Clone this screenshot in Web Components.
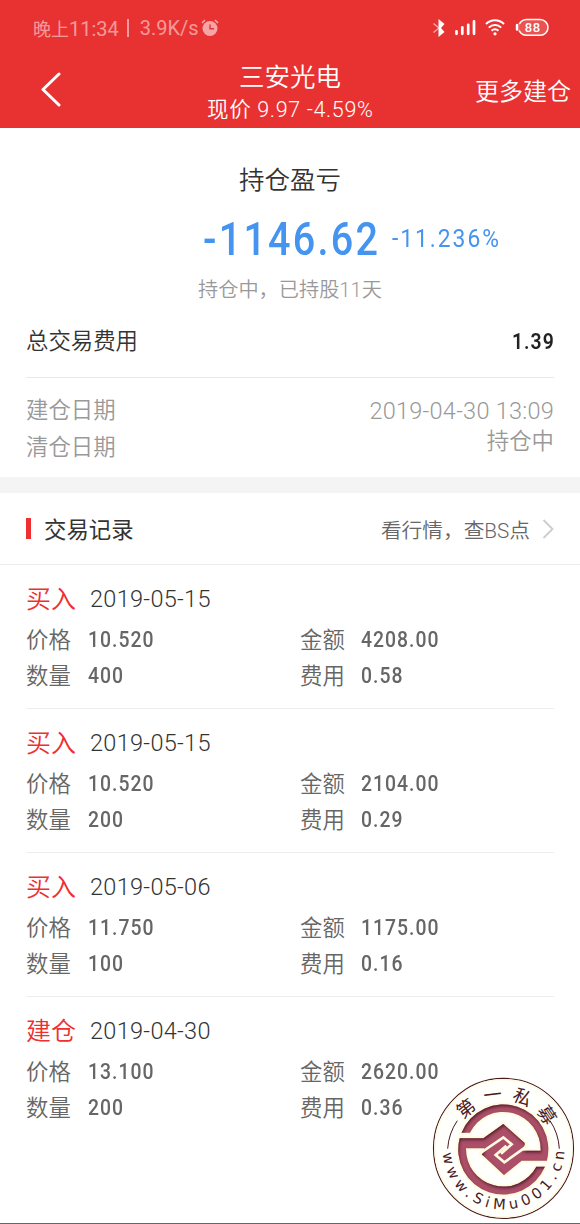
<!DOCTYPE html>
<html lang="zh-CN">
<head>
<meta charset="utf-8">
<title>三安光电</title>
<style>
body {
    margin: 0;
    background: #fff;
    font-family: Roboto, "Noto Sans CJK SC", sans-serif;
    font-weight: 350;
    color: #333;
}
</style>
</head>
<body>
<stock-page></stock-page>

<script>
customElements.define('status-bar',
    class StatusBar extends HTMLElement {
        constructor() {
        super();
        this.attachShadow({ mode: 'open' }).innerHTML = `
            <style>
            :host {
                display: flex;
                align-items: center;
                height: 56px;
                padding: 0 30px 0 33px;
                box-sizing: border-box;
                color: rgba(255, 255, 255, 0.52);
                font-size: 20px;
                font-weight: 400;
                white-space: pre;
            }

            .cjk { font-size: 18px; }
            .bar {
                width: 2px;
                height: 18px;
                margin: 0 11px 0 8px;
                background: currentColor;
            }
            .alarm { margin-left: 2px; }
            .icons {
                display: flex;
                align-items: center;
                margin-left: auto;
                color: #fff;
            }
            svg { display: block; }
            </style>

            <span class="time"><span class="cjk">晚上</span>11:34</span>
            <span class="bar"></span>
            <span>3.9K/s</span>
            <svg class="alarm" width="18" height="18" viewBox="0 0 18 18">
                <circle cx="9" cy="9.500" r="7.500" fill="#f5a5a7"/>
                <path d="M1 4 4 1M14 1l3 3" stroke="#f5a5a7" stroke-width="1.600"/>
                <path d="M9 5.500v4.300h4" fill="none" stroke="#e83231" stroke-width="1.400"/>
            </svg>
            <div class="icons">
                <svg width="118" height="20" viewBox="0 0 118 20">
                    <path d="M6.500 1 12.500 6 9 10 12.500 14 6.500 19z" fill="#fff"/>
                    <path d="M1.500 5.500 7 10 1.500 14.500" fill="none" stroke="#fff" stroke-opacity=".6" stroke-width="1.300"/>
                    <path d="M24.500 15.800v-2.500M30.300 15.800v-6.500M36.200 15.800v-9M42 15.800v-12.500" stroke="#fff" stroke-width="2.700" stroke-linecap="round"/>
                    <g fill="none" stroke="#fff" stroke-width="2">
                        <path d="M54 6a12.500 12.500 0 0 1 18 0"/>
                        <path d="M56.800 9.600a8.700 8.700 0 0 1 12.400 0"/>
                        <path d="M59.500 12.800a4.900 4.900 0 0 1 7 0"/>
                    </g>
                    <circle cx="63" cy="15.800" r="1.600" fill="#fff"/>
                    <rect x="86.500" y="1.600" width="29.500" height="15.600" rx="7.800" fill="#fff" fill-opacity=".16" stroke="#fff" stroke-width="1.500"/>
                    <path d="M85 7v4.500" stroke="#fff" stroke-width="2.400" stroke-linecap="round"/>
                    <path d="M87 5.800v6.800" stroke="#e83231" stroke-width="1.200"/>
                    <text x="100.500" y="13.900" text-anchor="middle" fill="#fff" font-size="13" font-weight="500" textLength="15.500">88</text>
                </svg>
            </div>
        `;
        }
    }
);

customElements.define('nav-bar',
    class NavBar extends HTMLElement {
        constructor() {
        super();
        this.attachShadow({ mode: 'open' }).innerHTML = `
            <style>
            :host {
                display: grid;
                grid-template-columns: 1fr auto 1fr;
                align-items: center;
                height: 72.400px;
                padding-bottom: 6px;
                box-sizing: border-box;
                color: #fff;
            }

            .back {
                margin-left: 40px;
                margin-bottom: 1px;
            }
            .center {
                text-align: center;
                padding-top: 2px;
            }
            .title {
                display: block;
                font-size: 25.500px;
                line-height: 38px;
            }
            .price {
                display: block;
                font-size: 21.500px;
                line-height: 27px;
                letter-spacing: 0.650px;
                margin-right: -0.650px;
                white-space: nowrap;
            }
            .action {
                display: block;
                justify-self: end;
                margin-right: 9px;
                font-size: 24px;
            }
            </style>

            <svg class="back" width="24" height="36" viewBox="0 0 24 36">
                <path d="M19 3 3 18.500l16 15.500" fill="none" stroke="#fff" stroke-width="3" stroke-linecap="round" stroke-linejoin="round"/>
            </svg>
            <div class="center">
                <slot name="title" class="title"></slot>
                <slot name="price" class="price"></slot>
            </div>
            <slot name="action" class="action"></slot>
        `;
        }
    }
);

customElements.define('profit-summary',
    class ProfitSummary extends HTMLElement {
        constructor() {
        super();
        this.attachShadow({ mode: 'open' }).innerHTML = `
            <style>
            :host {
                display: flex;
                flex-direction: column;
                align-items: center;
                height: 174px;
                padding-top: 33px;
                box-sizing: border-box;
            }

            h1 {
                margin: 0;
                font-size: 25.500px;
                line-height: 38px;
                font-weight: inherit;
            }
            .amount {
                display: flex;
                align-items: center;
                align-self: flex-start;
                height: 56px;
                margin: 13px 0 0 203px;
                color: #4494f0;
            }
            .profit, .rate {
                transform: scaleX(0.86);
                transform-origin: left;
            }
            .profit {
                width: 189px;
                font-size: 46px;
                font-weight: 500;
                letter-spacing: 2.600px;
            }
            .rate {
                font-size: 26.500px;
                font-weight: 450;
                letter-spacing: 2.300px;
                padding-bottom: 4px;
            }
            p {
                margin: 9px 0 0;
                font-size: 20.200px;
                line-height: 30px;
                color: #999;
            }
            </style>

            <h1><slot name="label"></slot></h1>
            <div class="amount">
                <span class="profit"><slot name="profit"></slot></span>
                <span class="rate"><slot name="rate"></slot></span>
            </div>
            <p><slot name="note"></slot></p>
        `;
        }
    }
);

customElements.define('position-info',
    class PositionInfo extends HTMLElement {
        constructor() {
        super();
        this.attachShadow({ mode: 'open' }).innerHTML = `
            <style>
            :host {
                display: block;
                height: 175px;
                padding: 0 26px;
                font-size: 22.400px;
                border-bottom: 16px solid #f4f4f4;
            }

            .fee {
                display: flex;
                justify-content: space-between;
                align-items: center;
                height: 75px;
                border-bottom: 1px solid #eaeaea;
            }
            .fee span { padding-bottom: 2px; }
            .fee b {
                margin-right: -1px;
                padding-top: 2px;
                font-size: 22.500px;
                font-weight: 600;
                letter-spacing: 1.200px;
                color: #222;
                transform: scaleX(0.86);
                transform-origin: right;
            }
            .dates {
                display: flex;
                justify-content: space-between;
                padding-top: 14px;
                color: #999;
            }
            .dates .names { line-height: 37px; }
            .dates .values {
                padding-top: 4px;
                line-height: 30px;
                text-align: right;
            }
            .dates .date {
                font-size: 23.500px;
                letter-spacing: 0.25px;
            }
            </style>

            <div class="fee">
                <span>总交易费用</span>
                <b><slot name="fee"></slot></b>
            </div>
            <div class="dates">
                <div class="names">
                    <div>建仓日期</div>
                    <div>清仓日期</div>
                </div>
                <div class="values">
                    <div class="date"><slot name="opened"></slot></div>
                    <div><slot name="closed"></slot></div>
                </div>
            </div>
        `;
        }
    }
);

customElements.define('section-head',
    class SectionHead extends HTMLElement {
        constructor() {
        super();
        this.attachShadow({ mode: 'open' }).innerHTML = `
            <style>
            :host {
                display: flex;
                align-items: center;
                height: 72px;
                padding: 0 26px;
                box-sizing: border-box;
                border-bottom: 1px solid #ececec;
            }

            .mark {
                width: 5px;
                height: 21px;
                margin-right: 13px;
                background: #ee3030;
            }
            h2 {
                margin: 0;
                padding-bottom: 1px;
                font-size: 22.400px;
                font-weight: 400;
            }
            .link {
                margin-left: auto;
                font-size: 20.700px;
                color: #666;
            }
            svg { margin-left: 12px; }
            </style>

            <span class="mark"></span>
            <h2><slot></slot></h2>
            <span class="link"><slot name="link"></slot></span>
            <svg width="12" height="20" viewBox="0 0 12 20">
                <path d="M1.500 1 10.500 10l-9 9" fill="none" stroke="#ccc" stroke-width="1.800"/>
            </svg>
        `;
        }
    }
);

customElements.define('trade-record',
    class TradeRecord extends HTMLElement {
        constructor() {
        super();
        const get = name => this.getAttribute(name);
        this.attachShadow({ mode: 'open' }).innerHTML = `
            <style>
            :host {
                display: block;
                height: 144px;
                margin: 0 26px;
                padding-top: 12px;
                box-sizing: border-box;
                border-bottom: 1px solid #eee;
                color: #666;
            }
            :host(:last-of-type) { border-bottom-color: transparent; }

            .head {
                display: flex;
                align-items: center;
                height: 40px;
                gap: 14px;
            }
            .kind {
                font-size: 25px;
                color: #ee3030;
            }
            .date {
                font-size: 23.500px;
                letter-spacing: 0.3px;
                color: #333;
                padding-top: 4px;
            }
            dl {
                display: grid;
                grid-template-columns: 62px 212px 61px 1fr;
                grid-auto-rows: 35.500px;
                align-items: center;
                margin: 3px 0 0;
            }
            dt { font-size: 22.400px; }
            dd {
                margin: 0;
                padding-top: 2px;
                font-size: 22.500px;
                font-weight: 500;
                letter-spacing: 1.200px;
                transform: scaleX(0.86);
                transform-origin: left;
            }
            </style>

            <div class="head">
                <span class="kind">${get('kind')}</span>
                <span class="date">${get('date')}</span>
            </div>
            <dl>
                <dt>价格</dt><dd>${get('price')}</dd>
                <dt>金额</dt><dd>${get('amount')}</dd>
                <dt>数量</dt><dd>${get('count')}</dd>
                <dt>费用</dt><dd>${get('fee')}</dd>
            </dl>
        `;
        }
    }
);

customElements.define('site-stamp',
    class SiteStamp extends HTMLElement {
        constructor() {
        super();
        this.attachShadow({ mode: 'open' }).innerHTML = `
            <style>
            :host { display: block; }
            svg { display: block; }
            </style>

            <svg width="155" height="154" viewBox="0 0 465 462">
                <defs>
                    <path id="top" d="M89 238a146 146 0 0 1 292 0"/>
                    <path id="bottom" d="M53 222A183 183 0 1 0 418 222"/>
                    <path id="upper" d="M109.600 188A135 135 0 0 1 365.600 272H290L237 315 170 253 235 198 300 222 292 242H347A112 112 0 0 0 134.800 188z"/>
                    <path id="lower" d="M359.600 290A135 135 0 0 1 104 205H175L235 162 300 220 235 278 175 253 178 235H123A112 112 0 0 0 334 290z"/>
                    <filter id="inset" x="-5%" y="-5%" width="110%" height="110%">
                        <feOffset in="SourceAlpha" dx="2" dy="6"/>
                        <feGaussianBlur stdDeviation="4" result="moved"/>
                        <feComposite in="SourceAlpha" in2="moved" operator="out" result="edge"/>
                        <feFlood flood-color="#3c0c1c" flood-opacity=".9"/>
                        <feComposite in2="edge" operator="in" result="shade"/>
                        <feMerge>
                            <feMergeNode in="SourceGraphic"/>
                            <feMergeNode in="shade"/>
                        </feMerge>
                    </filter>
                </defs>
                <circle cx="235.500" cy="235" r="210" fill="#fffffb" stroke="#4a1a22" stroke-width="3.500"/>
                <circle cx="235.500" cy="235" r="206" fill="none" stroke="#fdf9dc" stroke-width="4"/>
                <g fill="none" stroke="#4a1a22" stroke-width="3">
                    <path d="M97 152A168 168 0 0 0 68 236"/>
                    <path d="M375 152A168 168 0 0 1 403 236"/>
                </g>

                <g stroke="#fffbe0" stroke-width="12" fill="none">
                    <use href="#upper"/>
                    <use href="#lower"/>
                </g>
                <g fill="#ac5068" filter="url(#inset)">
                    <use href="#upper"/>
                    <use href="#lower"/>
                </g>
                <g fill="none" stroke="#fffbe0" stroke-width="8">
                    <path d="M162 252 235 202 260 223 228 251"/>
                    <path d="M308 227 238 277 212 255 244 227"/>
                </g>

                <text font-size="55" font-weight="400" fill="#4a1a22" letter-spacing="25"><textPath href="#top" startOffset="92">第一私募</textPath></text>
                <text font-family="DejaVu Sans" font-size="44" font-weight="400" fill="#4a1a22"><textPath href="#bottom" startOffset="28" textLength="552">www.SiMu001.cn</textPath></text>
            </svg>
        `;
        }
    }
);

customElements.define('stock-page',
    class StockPage extends HTMLElement {
        constructor() {
        super();
        this.attachShadow({ mode: 'open' }).innerHTML = `
            <style>
            :host {
                display: flex;
                flex-direction: column;
                position: relative;
                width: 580px;
                height: 1224px;
                overflow: hidden;
                box-sizing: border-box;
                border-bottom: 1px solid #666;
            }

            header { background: #e83231; }

            /* floats over the record list */
            site-stamp {
                position: absolute;
                right: 0;
                bottom: -1px;
            }
            </style>

            <header>
                <status-bar></status-bar>
                <nav-bar>
                    <span slot="title">三安光电</span>
                    <span slot="price">现价 9.97 -4.59%</span>
                    <span slot="action">更多建仓</span>
                </nav-bar>
            </header>
            <profit-summary>
                <span slot="label">持仓盈亏</span>
                <span slot="profit">-1146.62</span>
                <span slot="rate">-11.236%</span>
                <span slot="note">持仓中，已持股11天</span>
            </profit-summary>
            <position-info>
                <span slot="fee">1.39</span>
                <span slot="opened">2019-04-30 13:09</span>
                <span slot="closed">持仓中</span>
            </position-info>
            <section-head>交易记录<span slot="link">看行情，查BS点</span></section-head>
            <main>
                <trade-record kind="买入" date="2019-05-15" price="10.520" amount="4208.00" count="400" fee="0.58"></trade-record>
                <trade-record kind="买入" date="2019-05-15" price="10.520" amount="2104.00" count="200" fee="0.29"></trade-record>
                <trade-record kind="买入" date="2019-05-06" price="11.750" amount="1175.00" count="100" fee="0.16"></trade-record>
                <trade-record kind="建仓" date="2019-04-30" price="13.100" amount="2620.00" count="200" fee="0.36"></trade-record>
            </main>
            <site-stamp></site-stamp>
        `;
        }
    }
);
</script>
</body>
</html>
